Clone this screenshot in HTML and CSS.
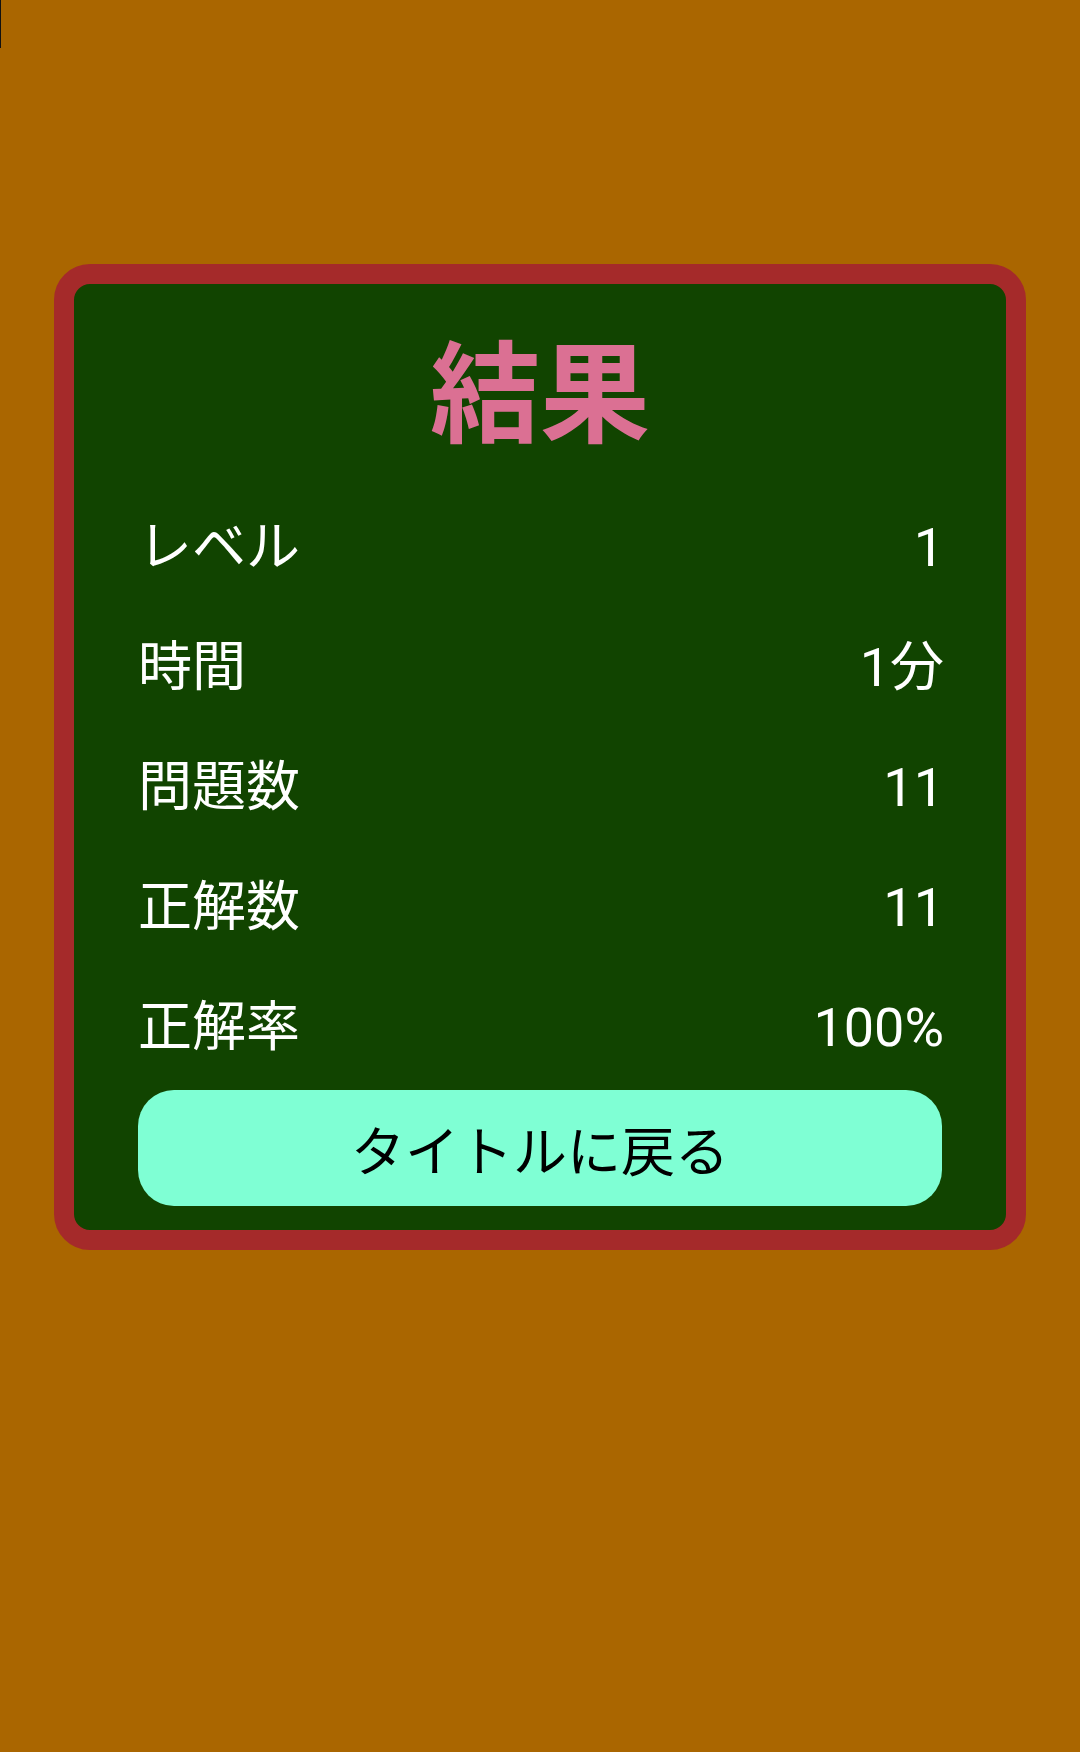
FILE: index.html
```html
<!DOCTYPE html>
<html lang="ja">
<head>
<meta charset="utf-8">
<title>結果</title>
<link rel="stylesheet" href="styles.css">
</head>
<body>
<div class="caret"></div>
<main class="page">
  <section class="card">
    <h1 class="title">結果</h1>
    <div class="rows">
      <div class="row"><span class="label">レベル</span><span class="value">1</span></div>
      <div class="row"><span class="label">時間</span><span class="value">1分</span></div>
      <div class="row"><span class="label">問題数</span><span class="value">11</span></div>
      <div class="row"><span class="label">正解数</span><span class="value">11</span></div>
      <div class="row"><span class="label">正解率</span><span class="value">100%</span></div>
    </div>
    <button class="back">タイトルに戻る</button>
  </section>
</main>
</body>
</html>
```
FILE: styles.css
```css
html, body {
  margin: 0;
  padding: 0;
}
body {
  background: #aa6600;
  width: 1080px;
  height: 1752px;
  font-family: Roboto, "Noto Sans CJK JP", sans-serif;
  position: relative;
  overflow: hidden;
}
.caret {
  position: absolute;
  left: 0;
  top: 0;
  width: 1px;
  height: 48px;
  background: #111;
}
.page {
  padding-top: 264px;
  display: flex;
  justify-content: center;
}
.card {
  width: 972px;
  box-sizing: border-box;
  background: #114400;
  border: 20px solid #a52a2a;
  border-radius: 36px;
  padding: 30px 64px 24px;
  display: flex;
  flex-direction: column;
}
.title {
  margin: 0 0 8px;
  text-align: center;
  font-size: 110px;
  line-height: 166px;
  font-weight: 700;
  color: #db7093;
}
.rows {
  display: flex;
  flex-direction: column;
}
.row {
  display: flex;
  justify-content: space-between;
  align-items: center;
  height: 120px;
  line-height: 120px;
  font-size: 54px;
  color: #ffffff;
}
.label {
  margin-left: 0;
}
.value {
  margin-right: -2px;
}
.back {
  margin-top: 2px;
  height: 116px;
  border: none;
  border-radius: 36px;
  background: #7fffd4;
  color: #000000;
  font-family: Roboto, "Noto Sans CJK JP", sans-serif;
  font-size: 54px;
  padding: 0;
}
```
